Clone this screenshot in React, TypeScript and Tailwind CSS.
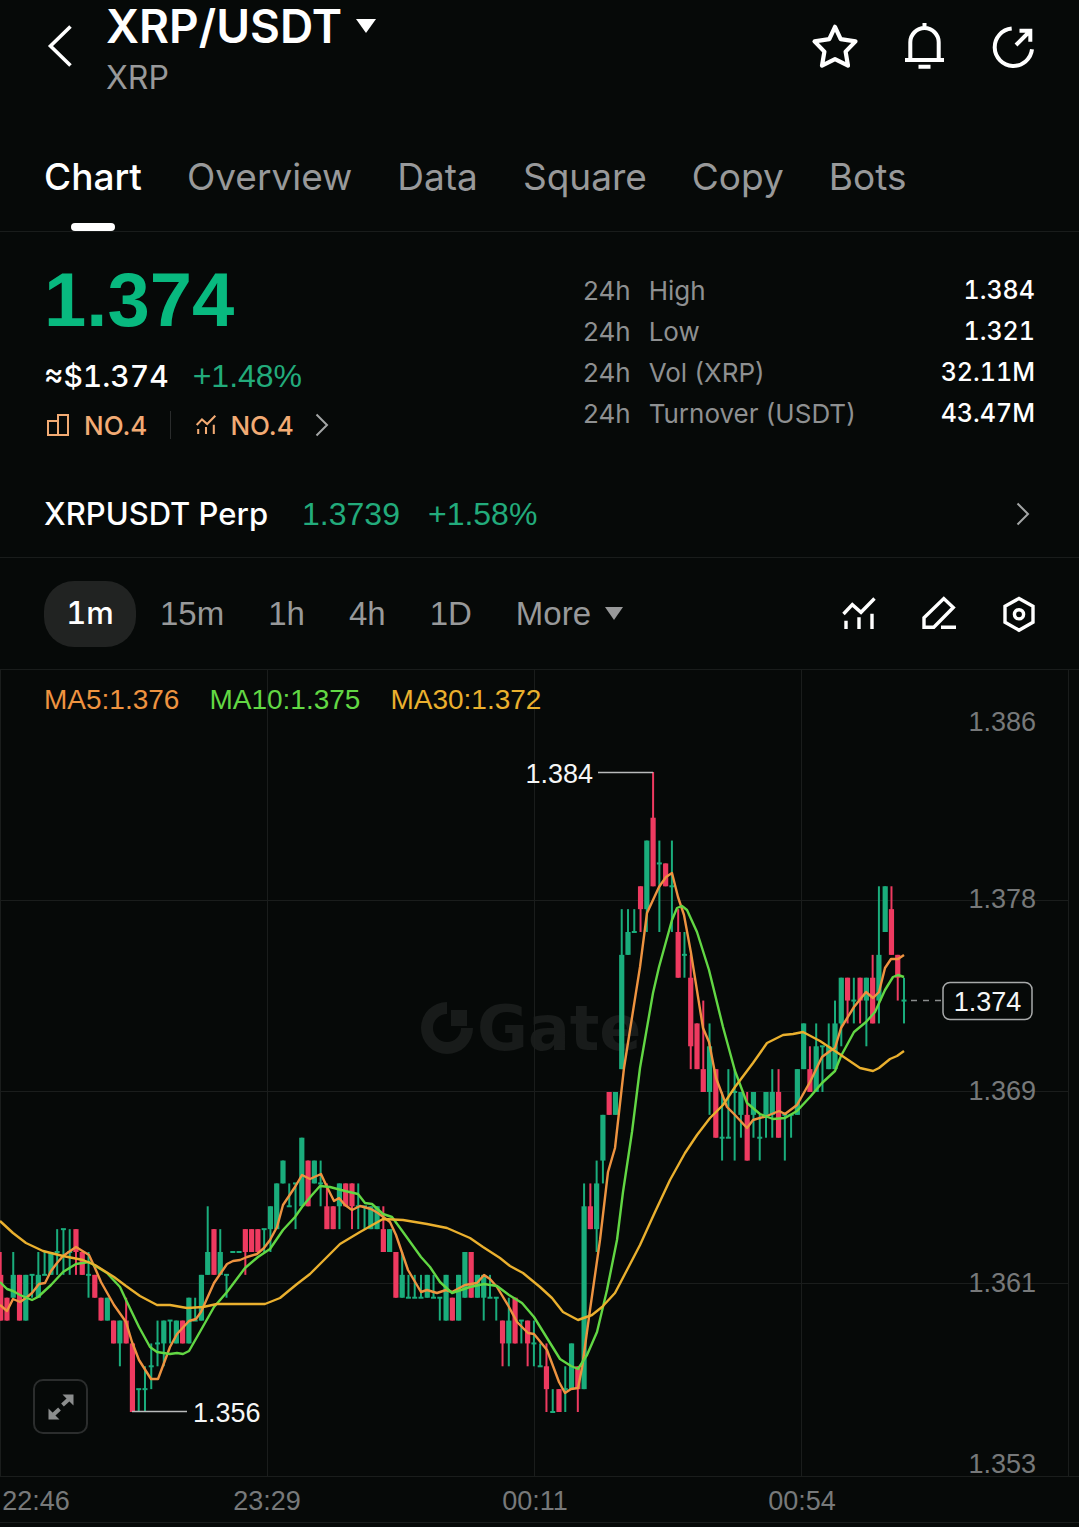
import React, { useState } from 'react';

// [direction, body high, body low, wick high, wick low], in ticks of 0.001 above 1.356
type Candle = ['u' | 'd', number, number, number, number];
type Point = [number, number];

const CANDLES: Candle[] = [
  ['d', 6, 4, 7, 4], ['d', 5, 4, 5, 4], ['u', 6, 5, 7, 5], ['d', 6, 4, 6, 4], ['u', 6, 4, 6, 4],
  ['u', 6, 6, 6, 5], ['u', 6, 5, 7, 5], ['u', 6, 6, 7, 6], ['u', 7, 6, 7, 6], ['u', 7, 7, 8, 6],
  ['u', 8, 8, 8, 6], ['u', 7, 7, 8, 6], ['d', 8, 7, 8, 6], ['d', 7, 6, 7, 6], ['u', 6, 6, 7, 5],
  ['d', 6, 5, 6, 5], ['d', 5, 4, 5, 4], ['u', 5, 4, 5, 4], ['d', 4, 3, 4, 3], ['u', 4, 3, 4, 2],
  ['d', 4, 3, 5, 3], ['d', 3, 0, 3, 0], ['u', 1, 1, 1, 0], ['u', 1, 1, 2, 0], ['u', 2, 2, 3, 1],
  ['u', 3, 3, 4, 2], ['u', 4, 3, 4, 2], ['u', 4, 4, 4, 3], ['u', 4, 3, 4, 3], ['d', 4, 3, 4, 3],
  ['u', 5, 3, 5, 3], ['u', 4, 4, 5, 4], ['u', 6, 4, 6, 4], ['u', 7, 6, 9, 6], ['d', 8, 6, 8, 6],
  ['u', 7, 6, 8, 6], ['u', 6, 6, 6, 5], ['u', 7, 7, 7, 7], ['u', 7, 7, 7, 7], ['d', 8, 7, 8, 6],
  ['d', 8, 7, 8, 7], ['d', 8, 7, 8, 7], ['u', 8, 8, 8, 7], ['u', 9, 8, 9, 7], ['u', 10, 8, 10, 8],
  ['u', 11, 10, 11, 10], ['u', 9, 9, 10, 9], ['u', 10, 10, 10, 8], ['u', 12, 9, 12, 9], ['d', 11, 9, 11, 9],
  ['u', 11, 10, 11, 10], ['u', 10, 10, 11, 9], ['d', 9, 8, 10, 8], ['d', 9, 8, 9, 8], ['u', 10, 9, 10, 8],
  ['d', 10, 9, 10, 9], ['d', 10, 9, 10, 8], ['u', 9, 9, 10, 8], ['u', 9, 9, 9, 8], ['u', 9, 8, 9, 8],
  ['u', 9, 8, 9, 8], ['d', 8, 7, 9, 7], ['u', 8, 7, 8, 7], ['d', 7, 5, 7, 5], ['u', 6, 5, 7, 5],
  ['u', 5, 5, 6, 5], ['u', 5, 5, 6, 5], ['u', 5, 5, 6, 5], ['u', 6, 5, 6, 5], ['u', 5, 5, 6, 5],
  ['u', 5, 5, 5, 4], ['u', 6, 4, 6, 4], ['d', 5, 4, 5, 4], ['u', 6, 4, 6, 4], ['u', 7, 5, 7, 5],
  ['d', 7, 5, 7, 5], ['u', 6, 5, 6, 5], ['u', 6, 5, 6, 4], ['u', 5, 5, 6, 5], ['u', 5, 5, 5, 4],
  ['d', 4, 3, 4, 2], ['u', 4, 3, 5, 2], ['d', 5, 3, 5, 3], ['u', 4, 4, 4, 3], ['d', 4, 3, 4, 2],
  ['u', 3, 3, 4, 2], ['u', 2, 2, 3, 2], ['d', 2, 1, 3, 0], ['u', 0, 0, 1, 0], ['d', 1, 0, 1, 0],
  ['u', 1, 1, 2, 0], ['u', 3, 1, 3, 1], ['d', 2, 1, 2, 0], ['u', 9, 1, 10, 1], ['d', 9, 8, 10, 8],
  ['u', 10, 8, 11, 7], ['u', 13, 11, 13, 10], ['d', 14, 13, 14, 13], ['u', 14, 13, 14, 13], ['u', 20, 15, 22, 15],
  ['u', 21, 20, 22, 20], ['u', 21, 21, 22, 21], ['d', 23, 22, 23, 21], ['u', 25, 22, 25, 21], ['d', 26, 23, 28, 23],
  ['u', 24, 24, 25, 21], ['d', 24, 23, 24, 23], ['u', 23, 23, 25, 21], ['d', 21, 19, 22, 19], ['u', 20, 20, 21, 19],
  ['d', 19, 16, 20, 15], ['d', 17, 15, 17, 15], ['d', 15, 14, 18, 14], ['u', 16, 14, 17, 13], ['d', 15, 12, 15, 12],
  ['u', 12, 12, 14, 11], ['u', 12, 12, 15, 12], ['u', 14, 14, 15, 11], ['u', 14, 13, 14, 12], ['d', 13, 11, 14, 11],
  ['u', 14, 13, 14, 12], ['u', 12, 12, 13, 11], ['u', 14, 13, 14, 12], ['u', 14, 13, 15, 12], ['d', 14, 12, 15, 12],
  ['u', 13, 13, 13, 11], ['u', 13, 13, 13, 12], ['u', 15, 13, 15, 13], ['u', 17, 15, 17, 15], ['d', 15, 14, 16, 14],
  ['u', 16, 14, 17, 14], ['u', 16, 16, 16, 14], ['u', 16, 15, 17, 15], ['u', 17, 15, 18, 15], ['u', 19, 17, 19, 16],
  ['d', 19, 18, 19, 17], ['u', 18, 18, 19, 17], ['d', 19, 18, 19, 17], ['u', 19, 18, 19, 16], ['d', 19, 17, 20, 17],
  ['u', 20, 18, 23, 17], ['u', 23, 21, 23, 21], ['d', 22, 20, 23, 20], ['d', 20, 19, 20, 18], ['u', 18, 18, 19, 17],
];

const MA5: Point[] = [
  [0, 1305], [7, 1311], [13, 1299], [20, 1302], [26, 1298], [32, 1293], [39, 1284], [45, 1283], [51, 1271],
  [57, 1263], [63, 1256], [76, 1247], [89, 1255], [95, 1268], [101, 1282], [114, 1305], [126, 1322], [132, 1342],
  [139, 1360], [151, 1379], [158, 1379], [170, 1347], [177, 1334], [189, 1321], [196, 1319], [201, 1312],
  [214, 1283], [227, 1264], [233, 1261], [240, 1260], [247, 1257], [257, 1254], [264, 1248], [270, 1240],
  [277, 1227], [283, 1205], [295, 1187], [302, 1175], [310, 1179], [321, 1174], [327, 1187], [334, 1201],
  [339, 1198], [345, 1205], [352, 1210], [360, 1206], [371, 1209], [378, 1213], [390, 1222], [396, 1235],
  [408, 1270], [421, 1292], [427, 1290], [437, 1293], [446, 1290], [452, 1292], [465, 1285], [477, 1283],
  [484, 1275], [490, 1279], [497, 1287], [509, 1307], [517, 1322], [528, 1333], [534, 1334], [547, 1350],
  [559, 1382], [565, 1393], [571, 1389], [578, 1388], [582, 1368], [590, 1310], [600, 1240], [608, 1172],
  [615, 1148], [624, 1068], [640, 967], [647, 913], [659, 887], [666, 877], [672, 873], [678, 897], [684, 915],
  [691, 953], [703, 1028], [709, 1042], [716, 1078], [727, 1107], [735, 1115], [747, 1128], [753, 1120],
  [767, 1116], [779, 1111], [785, 1114], [797, 1105], [810, 1082], [822, 1057], [830, 1051], [835, 1048],
  [841, 1028], [854, 1007], [866, 992], [873, 998], [879, 992], [885, 968], [891, 959], [898, 959], [904, 955],
];

const MA10: Point[] = [
  [0, 1282], [7, 1289], [13, 1291], [20, 1295], [32, 1300], [38, 1297], [51, 1285], [63, 1272], [76, 1264],
  [89, 1262], [107, 1273], [120, 1287], [126, 1300], [139, 1327], [150, 1347], [157, 1352], [170, 1354],
  [177, 1353], [183, 1354], [189, 1351], [201, 1330], [214, 1307], [227, 1292], [245, 1268], [258, 1257],
  [270, 1249], [283, 1230], [295, 1217], [302, 1207], [312, 1195], [320, 1186], [330, 1187], [345, 1191],
  [358, 1194], [365, 1203], [372, 1204], [383, 1214], [392, 1217], [403, 1232], [421, 1257], [430, 1267],
  [440, 1282], [452, 1293], [470, 1287], [484, 1284], [497, 1286], [509, 1295], [522, 1303], [534, 1317],
  [547, 1338], [560, 1359], [571, 1366], [578, 1369], [587, 1355], [597, 1332], [607, 1290], [617, 1240],
  [623, 1192], [632, 1132], [640, 1068], [653, 993], [659, 967], [672, 920], [677, 908], [682, 906], [687, 910],
  [697, 932], [709, 970], [723, 1027], [735, 1071], [747, 1103], [760, 1114], [773, 1119], [785, 1118],
  [797, 1111], [810, 1097], [822, 1083], [835, 1071], [841, 1056], [854, 1032], [866, 1022], [875, 1012],
  [885, 990], [893, 977], [898, 975], [904, 977],
];

const MA30: Point[] = [
  [0, 1221], [13, 1233], [26, 1243], [43, 1251], [63, 1256], [83, 1260], [95, 1265], [114, 1277], [126, 1286],
  [140, 1296], [157, 1305], [170, 1305], [187, 1308], [203, 1307], [217, 1304], [265, 1304], [280, 1298],
  [297, 1284], [310, 1274], [321, 1263], [340, 1244], [360, 1232], [383, 1219], [403, 1220], [427, 1224],
  [447, 1228], [470, 1238], [483, 1247], [500, 1258], [510, 1266], [523, 1273], [540, 1287], [552, 1298],
  [563, 1312], [578, 1320], [592, 1315], [602, 1307], [615, 1293], [627, 1270], [640, 1245], [655, 1212],
  [670, 1180], [685, 1153], [697, 1135], [710, 1118], [723, 1105], [735, 1087], [753, 1063], [767, 1043],
  [783, 1035], [793, 1034], [803, 1032], [820, 1041], [835, 1051], [860, 1068], [873, 1071], [879, 1068],
  [890, 1059], [897, 1056], [904, 1051],
];

const TABS = ['Chart', 'Overview', 'Data', 'Square', 'Copy', 'Bots'];
const PERIODS = ['15m', '1h', '4h', '1D'];

const STATS = [
  { label: 'High', value: '1.384' },
  { label: 'Low', value: '1.321' },
  { label: 'Vol (XRP)', value: '32.11M' },
  { label: 'Turnover (USDT)', value: '43.47M' },
];

const PRICE_LABELS = [
  { text: '1.386', y: 731 },
  { text: '1.378', y: 908 },
  { text: '1.369', y: 1100 },
  { text: '1.361', y: 1292 },
  { text: '1.353', y: 1473 },
];

const TIME_LABELS = [
  { text: '22:46', x: 36 },
  { text: '23:29', x: 267 },
  { text: '00:11', x: 535 },
  { text: '00:54', x: 802 },
];

const xOf = (i: number) => 0.7 + i * 6.273;
const yOf = (tick: number) => 1412 - (tick * 640) / 28;
const toPoints = (points: Point[]) => points.map((p) => p.join(',')).join(' ');

const ChevronRight: React.FC = () => (
  <svg className="h-6 w-4" viewBox="0 0 16 24" fill="none" stroke="#a3a5a5" strokeWidth="2">
    <path d="M2.5 1.5 13 12 2.5 22.5" />
  </svg>
);

const TrendIcon: React.FC<{ className: string }> = ({ className }) => (
  <svg className={className} viewBox="0 0 40 40" fill="none" stroke="currentColor" strokeWidth="3.4">
    <path d="M4.5 20 13.3 10.7 22 18.3 35.5 4.5M7 26.7V35M20 23.3V35M33 19.7V35" />
  </svg>
);

const PriceChart: React.FC = () => (
  <svg
    className="block h-auto w-full font-['Liberation_Sans',sans-serif] text-[27px]"
    viewBox="0 670 1079 857"
    role="img"
    aria-label="XRP/USDT 1m"
  >
    {/* Watermark */}
    <g fill="#181b1a" stroke="none">
      <path d="M447 1002a26 26 0 1 0 26 26h-12a14 14 0 1 1-14-14z" />
      <path d="M451 1010h16v16h-16z" />
      <text x="477" y="1050" className="font-['DejaVu_Sans',sans-serif] text-[62px] font-bold">Gate</text>
    </g>

    {/* Grid */}
    <g stroke="#1a1d1c" strokeWidth="1">
      {[0.5, 267.5, 534.5, 801.5, 1068.5].map((x) => (
        <line key={x} x1={x} x2={x} y1="670" y2="1476" />
      ))}
      {[900.5, 1091.5, 1283.5].map((y) => (
        <line key={y} x1="0" x2="1069" y1={y} y2={y} />
      ))}
      <line x1="0" x2="1079" y1="1476.5" y2="1476.5" />
      <line x1="0" x2="1079" y1="1522.5" y2="1522.5" />
    </g>

    {/* Candles */}
    {CANDLES.map(([dir, bodyHigh, bodyLow, high, low], i) => {
      const x = xOf(i);
      const fill = dir === 'u' ? '#1aad7c' : '#ee3a60';
      const top = yOf(bodyHigh);
      return (
        <g key={i} fill={fill}>
          <rect x={x - 1} y={yOf(high)} width="2" height={yOf(low) - yOf(high)} />
          {bodyHigh === bodyLow ? (
            <rect x={x - 2.5} y={top - 1} width="5" height="2" />
          ) : (
            <rect x={x - 2.6} y={top} width="5.2" height={yOf(bodyLow) - top} />
          )}
        </g>
      );
    })}

    {/* Moving averages */}
    <g fill="none" strokeWidth="2.4" strokeLinejoin="round">
      <polyline points={toPoints(MA5)} stroke="#ee9340" />
      <polyline points={toPoints(MA10)} stroke="#62d744" />
      <polyline points={toPoints(MA30)} stroke="#eab02e" />
    </g>

    {/* Period high and low */}
    <path d="M598 772.5H653M132 1411.5H187" stroke="#b9bbbb" strokeWidth="1.5" />
    <g fill="#f5f6f6">
      <text x="593" y="783" textAnchor="end">1.384</text>
      <text x="193" y="1422">1.356</text>
    </g>

    {/* Last price */}
    <path d="M911 1000.5H943" stroke="#8a8d8d" strokeWidth="1.5" strokeDasharray="6 6" />
    <rect x="943" y="982.5" width="89" height="37" rx="7" fill="#060908" stroke="#a8aaaa" strokeWidth="1.5" />
    <text x="987.5" y="1011" fill="#f5f6f6" textAnchor="middle">1.374</text>

    {/* Axes */}
    <g fill="#77797a">
      {PRICE_LABELS.map((l) => (
        <text key={l.text} x="1036" y={l.y} textAnchor="end">{l.text}</text>
      ))}
      {TIME_LABELS.map((l) => (
        <text key={l.text} x={l.x} y="1510" textAnchor="middle">{l.text}</text>
      ))}
    </g>
  </svg>
);

export default function App() {
  const [tab, setTab] = useState('Chart');

  return (
    <div className="min-h-screen bg-[#060908] font-['Inter','Liberation_Sans',sans-serif] text-white">
      {/* Header */}
      <header className="flex items-start justify-between pr-[42px] pl-11">
        <div className="flex">
          <button aria-label="Back" className="mt-6 h-11 w-[62px]">
            <svg className="h-11 w-8" viewBox="0 0 32 44" fill="none" stroke="currentColor" strokeWidth="3.6">
              <path d="M26.5 2.5 6.5 22 26.5 41.5" />
            </svg>
          </button>
          <div>
            <button className="flex items-center gap-3.5 text-[46px] leading-[52px] font-semibold">
              <h1>XRP/USDT</h1>
              <svg className="h-4 w-5" viewBox="0 0 20 16" fill="currentColor">
                <path d="M0 1h20L10 15z" />
              </svg>
            </button>
            <p className="mt-1.5 text-[32px] leading-10 text-[#98999a]">XRP</p>
          </div>
        </div>
        <div className="mt-[23px] flex gap-[41px]">
          <button aria-label="Favorite">
            <svg className="size-12" viewBox="0 0 48 48" fill="none" stroke="currentColor" strokeWidth="4.2" strokeLinejoin="round">
              <path d="m24 3.8 5.7 12.4 14.8 2.2-9.9 10.2 2.4 14-13-6.4-13 6.4 2.4-14L3.5 18.4l14.8-2.2z" />
            </svg>
          </button>
          <button aria-label="Price alert">
            <svg className="size-12" viewBox="0 0 48 48" fill="none" stroke="currentColor" strokeWidth="4">
              <path d="M24.5 0v5M10.3 37V19.3a14.2 14.2 0 0 1 28.4 0V37M5 37h39M18.5 43.7h12" />
            </svg>
          </button>
          <button aria-label="Share">
            <svg className="size-12" viewBox="0 0 48 48" fill="none" stroke="currentColor" strokeWidth="4">
              <path d="M22.7 5.6A18.7 18.7 0 1 0 43 26.3M27 22 41 8M30.5 7.7h10.8v11" />
            </svg>
          </button>
        </div>
      </header>

      {/* Tabs */}
      <nav className="flex gap-[45px] border-b border-[#191c1b] px-11 pt-[51px]">
        {TABS.map((t) => (
          <button key={t} onClick={() => setTab(t)} className="flex flex-col items-center">
            <span className={`text-[37px] leading-14 ${t === tab ? 'font-medium text-white' : 'text-[#98999a]'}`}>{t}</span>
            <span className={`mt-[18px] h-2 w-11 rounded-full ${t === tab ? 'bg-white' : ''}`} />
          </button>
        ))}
      </nav>

      {/* Price summary */}
      <section className="grid grid-cols-[539fr_452fr] px-11 pt-7">
        <div>
          <p className="font-['Liberation_Sans',sans-serif] text-[76px] leading-20 font-bold text-[#08b97f]">1.374</p>
          <p className="mt-4 flex gap-6 text-[32px] leading-10">
            <span className="text-[30px] font-medium tabular-nums">≈$1.374</span>
            <span className="font-['Liberation_Sans',sans-serif] text-[#22ab7b]">+1.48%</span>
          </p>
          <a href="#rank" className="mt-[13px] flex h-8 items-center text-[26px] font-medium text-[#f2ab74]">
            <svg className="size-7" viewBox="0 0 28 28" fill="none" stroke="currentColor" strokeWidth="2">
              <path d="M4 24V10h10V4h10v20zM14 10v14" />
            </svg>
            <span className="ml-3">NO.4</span>
            <span className="mx-[23px] h-7 w-px bg-[#2a2c2c]" />
            <TrendIcon className="size-6" />
            <span className="mr-5 ml-3">NO.4</span>
            <ChevronRight />
          </a>
        </div>
        <dl className="mt-2.5 text-[26px] leading-[41px]">
          {STATS.map((s) => (
            <div key={s.label} className="flex justify-between">
              <dt className="flex gap-[18px] text-[#8e9091]">
                <span>24h</span>
                <span>{s.label}</span>
              </dt>
              <dd className="text-[25px] font-medium tabular-nums">{s.value}</dd>
            </div>
          ))}
        </dl>
      </section>

      {/* Perpetual contract */}
      <a href="#perp" className="mt-[30px] flex h-[87px] items-center border-b border-[#191c1b] pr-12 pl-11 text-[32px]">
        <span className="text-[31px] font-medium">XRPUSDT Perp</span>
        <span className="ml-[34px] font-['Liberation_Sans',sans-serif] text-[#22ab7b]">1.3739</span>
        <span className="ml-7 flex-1 font-['Liberation_Sans',sans-serif] text-[#22ab7b]">+1.58%</span>
        <ChevronRight />
      </a>

      {/* Period selector */}
      <div className="flex h-28 items-center justify-between border-b border-[#191c1b] pr-10 pl-11 text-[#98999a]">
        <div className="flex items-center">
          <button className="h-[66px] w-[92px] rounded-[30px] bg-[#212322] text-[31px] font-medium text-white tabular-nums">1m</button>
          <div className="ml-6 flex gap-11 font-['Liberation_Sans',sans-serif] text-[33px]">
            {PERIODS.map((p) => (
              <button key={p}>{p}</button>
            ))}
            <button className="flex items-center gap-3.5">
              More
              <svg className="h-3.5 w-[18px]" viewBox="0 0 18 14" fill="currentColor">
                <path d="M0 0h18L9 13z" />
              </svg>
            </button>
          </div>
        </div>
        <div className="flex gap-10 text-white">
          <button aria-label="Indicators">
            <TrendIcon className="size-10" />
          </button>
          <button aria-label="Draw">
            <svg className="size-10" viewBox="0 0 40 40" fill="none" stroke="currentColor" strokeWidth="3.4">
              <path d="M5 33.3V23.8L24.8 4.5 34.3 13.5 14.8 33.3zM22 33.3H37" />
            </svg>
          </button>
          <button aria-label="Settings">
            <svg className="size-10" viewBox="0 0 40 40" fill="none" stroke="currentColor" strokeWidth="3.4">
              <path d="M20 4.5 34 12.3V28.3L20 36.2 6 28.3V12.3z" />
              <circle cx="20" cy="20.3" r="4.6" />
            </svg>
          </button>
        </div>
      </div>

      {/* Chart */}
      <main className="relative">
        <PriceChart />
        <div className="absolute top-2.5 left-11 flex gap-[30px] font-['Liberation_Sans',sans-serif] text-[28px] leading-10">
          <span className="text-[#ee9340]">MA5:1.376</span>
          <span className="text-[#62d744]">MA10:1.375</span>
          <span className="text-[#eab02e]">MA30:1.372</span>
        </div>
        <button
          aria-label="Full screen"
          className="absolute bottom-[93px] left-[33px] flex size-[55px] items-center justify-center rounded-[10px] border-2 border-[#2b2d2d]"
        >
          <svg className="size-7" viewBox="0 0 28 28" fill="#8b8d8d" stroke="#8b8d8d">
            <path d="M15.5 1.5h11v11zM1.5 15.5v11h11z" stroke="none" />
            <path d="M22 6l-6.5 6M6 22l6.5-6" strokeWidth="4" />
          </svg>
        </button>
      </main>
    </div>
  );
}
